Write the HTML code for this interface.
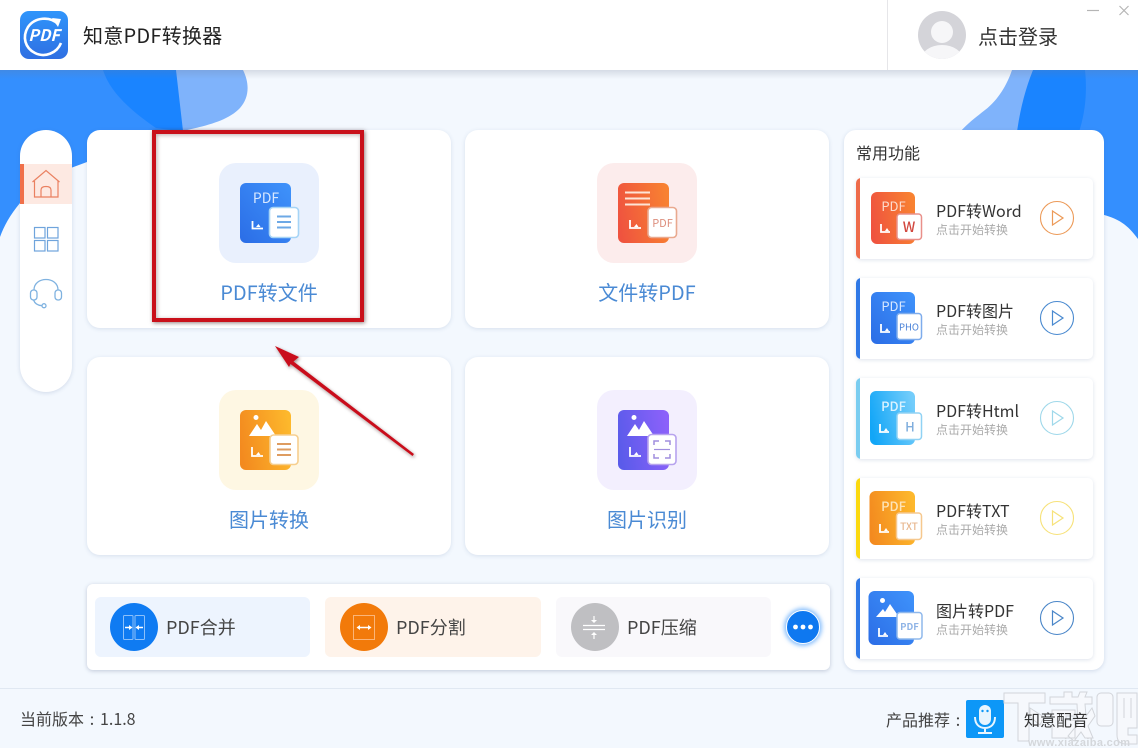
<!DOCTYPE html>
<html lang="zh"><head><meta charset="utf-8"><title>知意PDF转换器</title>
<style>
html,body{margin:0;padding:0}
body{width:1138px;height:748px;position:relative;overflow:hidden;background:#f3f8fe;font-family:"Noto Sans CJK SC","Liberation Sans",sans-serif;color:#333}
div,svg{position:absolute;box-sizing:border-box}
svg text{font-family:"Noto Sans CJK SC","Liberation Sans",sans-serif}
.t{white-space:nowrap}
.c{display:inline-block;width:16px;text-align:center}
.card{background:#fff;border-radius:13px;box-shadow:0 1px 4px rgba(70,100,150,.16);width:364px;height:198px}
.tile{left:132px;top:33px;width:100px;height:100px;border-radius:17px}
.lbl{left:0;width:364px;text-align:center;top:147px;font-size:20px;line-height:30px;color:#4a8ad4}
.row{left:856px;width:237px;height:81px;background:#fff;border-radius:5px;box-shadow:0 1px 4px rgba(70,100,150,.18);overflow:hidden}
.bar{left:0;top:0;width:4px;height:81px}
.rt{left:80px;top:20px;font-size:16px;line-height:24px;color:#333;white-space:nowrap}
.rs{left:80px;top:44px;font-size:12px;line-height:16px;color:#aaa;white-space:nowrap}
.it{top:597px;height:60px;border-radius:6px}
.circ{top:6px;left:15px;width:48px;height:48px;border-radius:50%}
.il{left:71px;top:17px;font-size:18px;line-height:27px;color:#444;white-space:nowrap}
</style></head><body>

<svg style="left:0;top:0" width="1138" height="748" viewBox="0 0 1138 748">
<path d="M0 70H186V140H150L87 162 60 172 20 203C10 215 4 226 0 237Z" fill="#348ffe"/>
<path d="M103 70H176L185 132 156 128C130 110 110 92 103 70Z" fill="#1a84ff"/>
<path d="M176 70H243C250 84 249 98 240 108 228 121 205 126 183 131Z" fill="#7fb3fb"/>
<path d="M1012 70C1007 85 998 100 985 110 975 118 968 123 960 132H1020L1034 70Z" fill="#7fb3fb"/>
<path d="M1060 70H1138V239C1128 225 1118 218 1100 214L1060 132Z" fill="#348ffe"/>
<path d="M1033 70C1025 90 1020 110 1017 132H1079C1086 110 1087 90 1085 70Z" fill="#1a84ff"/>
</svg>
<div style="left:0;top:70px;width:1138px;height:9px;background:linear-gradient(rgba(110,120,145,.22),rgba(110,120,145,0))"></div>

<!-- header -->
<div style="left:0;top:0;width:1138px;height:70px;background:#fff"></div>
<div style="left:887px;top:0;width:1px;height:70px;background:#e6e6e9"></div>
<svg style="left:20px;top:11px" width="48" height="48" viewBox="0 0 48 48">
<defs><linearGradient id="lg" x1="0" y1="0" x2="0" y2="1"><stop offset="0" stop-color="#2f95fb"/><stop offset="1" stop-color="#2f6fe2"/></linearGradient></defs>
<rect width="48" height="48" rx="9" fill="url(#lg)"/>
<path d="M38 13C30 5 15 6 8 16 2 26 5 37 15 42 25 47 37 42 41 32" fill="none" stroke="#fff" stroke-width="2.600"/>
<path d="M32 7l9 1-3 8z" fill="#fff"/>
<text x="24" y="30" text-anchor="middle" font-size="16" font-weight="700" font-style="italic" fill="#fff">PDF</text>
</svg>
<div class="t" style="left:83px;top:20px;font-size:20px;line-height:30px;color:#222;letter-spacing:.25px">知意PDF转换器</div>
<svg style="left:918px;top:11px" width="48" height="48" viewBox="0 0 48 48">
<defs><clipPath id="av"><circle cx="24" cy="24" r="24"/></clipPath></defs>
<circle cx="24" cy="24" r="24" fill="#d4d4d9"/>
<g clip-path="url(#av)"><circle cx="24" cy="21" r="11" fill="#f6f6f8"/><ellipse cx="24" cy="49" rx="21" ry="15" fill="#f6f6f8"/></g>
</svg>
<div class="t" style="left:978px;top:21px;font-size:20px;line-height:30px;color:#333">点击登录</div>
<svg style="left:1080px;top:0" width="58" height="20" viewBox="0 0 58 20">
<path d="M7 10.500H19" stroke="#b5b5b5" stroke-width="1.200"/><path d="M39.500 6l9 9M48.500 6l-9 9" stroke="#b5b5b5" stroke-width="1.200"/>
</svg>

<!-- sidebar -->
<div style="left:20px;top:130px;width:52px;height:262px;border-radius:26px;background:#fff;box-shadow:0 1px 4px rgba(70,100,150,.2)"></div>
<div style="left:20px;top:164px;width:52px;height:40px;background:#fde9e2"></div>
<div style="left:20px;top:164px;width:4px;height:40px;background:#f0704a"></div>
<svg style="left:20px;top:164px" width="52" height="160" viewBox="0 0 52 160">
<g fill="none" stroke="#ea8060" stroke-width="1.200"><path d="M12.500 18L26 6.500 39.500 18M14.500 17V33H38V17M21 33V26Q21 22.500 26 22.500 31 22.500 31 26V33"/></g>
<g fill="none" stroke="#6fa4dc" stroke-width="1.200"><rect x="14.500" y="63.500" width="10.500" height="10.500"/><rect x="27.500" y="63.500" width="10.500" height="10.500"/><rect x="14.500" y="76.500" width="10.500" height="10.500"/><rect x="27.500" y="76.500" width="10.500" height="10.500"/></g>
<g fill="none" stroke="#7fb2e0" stroke-width="1.300"><path d="M14 126C14 112 38 112 38 126"/><rect x="10.500" y="126" width="6.500" height="10" rx="3"/><rect x="35" y="126" width="6.500" height="10" rx="3"/><path d="M13.500 136C15 140 18 141.500 22 141.700"/><circle cx="24" cy="141.700" r="2"/></g>
</svg>

<!-- cards -->
<div class="card" style="left:87px;top:130px">
<div class="tile" style="background:#e9f0fd"></div>
<div class="lbl">PDF转文件</div>
</div>
<div class="card" style="left:465px;top:130px">
<div class="tile" style="background:#fcecec"></div>
<div class="lbl">文件转PDF</div>
</div>
<div class="card" style="left:87px;top:357px">
<div class="tile" style="background:#fef7e3"></div>
<div class="lbl">图片转换</div>
</div>
<div class="card" style="left:465px;top:357px">
<div class="tile" style="background:#f3effe"></div>
<div class="lbl">图片识别</div>
</div>

<!-- big icons -->
<svg style="left:0;top:0" width="1138" height="748" viewBox="0 0 1138 748">
<defs>
<linearGradient id="gb" x1="0" y1="1" x2="1" y2="0"><stop offset="0" stop-color="#2b6de6"/><stop offset="1" stop-color="#3f93fb"/></linearGradient>
<linearGradient id="gr" x1="0" y1=".6" x2="1" y2=".4"><stop offset="0" stop-color="#ef533f"/><stop offset="1" stop-color="#f88231"/></linearGradient>
<linearGradient id="go" x1="0" y1=".6" x2="1" y2=".4"><stop offset="0" stop-color="#f38a1f"/><stop offset="1" stop-color="#fdb82c"/></linearGradient>
<linearGradient id="gp" x1="0" y1=".6" x2="1" y2=".4"><stop offset="0" stop-color="#5a5bea"/><stop offset="1" stop-color="#8c61fa"/></linearGradient>
<linearGradient id="gc" x1="0" y1=".6" x2="1" y2=".3"><stop offset="0" stop-color="#12a6f7"/><stop offset="1" stop-color="#74cdfb"/></linearGradient>
</defs>
<!-- PDF to file -->
<rect x="240" y="183" width="51" height="60" rx="6" fill="url(#gb)"/>
<text x="266" y="203" text-anchor="middle" font-size="14" fill="#d8e8ff">PDF</text>
<path d="M252.500 221v7.500H263" fill="none" stroke="#fff" stroke-width="1.800"/><path d="M256 227l2.500-3 2 3z" fill="#fff"/>
<rect x="269.500" y="207.500" width="29" height="30" rx="3.500" fill="#fff" stroke="#a6d4f6" stroke-width="1.600"/>
<path d="M277 216.500h14M277 222h14M277 227.500h14" stroke="#6da9e6" stroke-width="2"/>
<!-- file to PDF -->
<rect x="618" y="183" width="51" height="60" rx="6" fill="url(#gr)"/>
<path d="M625 192.500h25M625 198.500h25M625 204.500h25" stroke="#fde4d6" stroke-width="2"/>
<path d="M630 220v8H641" fill="none" stroke="#fff" stroke-width="1.800"/><path d="M634 227l2.500-3 2 3z" fill="#fff"/>
<rect x="648" y="207.500" width="28.500" height="30" rx="3.500" fill="#fff" stroke="#e9a98f" stroke-width="1.600"/>
<text x="662.500" y="227" text-anchor="middle" font-size="11" fill="#dd8f7e">PDF</text>
<!-- image convert -->
<rect x="240" y="410" width="51" height="60" rx="6" fill="url(#go)"/>
<circle cx="256" cy="417.500" r="2.500" fill="#fff"/>
<path d="M249 436l8-12 4 6 5-9 10 15z" fill="#fff"/>
<path d="M252 447v9H263" fill="none" stroke="#fff" stroke-width="1.800"/><path d="M256 455l2.500-3 2 3z" fill="#fff"/>
<rect x="270" y="435" width="28" height="29.500" rx="3.500" fill="#fff" stroke="#f6cf90" stroke-width="1.600"/>
<path d="M277 444h14M277 449.500h14M277 455h14" stroke="#de9c60" stroke-width="1.900"/>
<!-- image recog -->
<rect x="618" y="410" width="51" height="60" rx="6" fill="url(#gp)"/>
<circle cx="634" cy="417.500" r="2.500" fill="#fff"/>
<path d="M627 436l8-12 4 6 5-9 10 15z" fill="#fff"/>
<path d="M630 447v9H641" fill="none" stroke="#fff" stroke-width="1.800"/><path d="M634 455l2.500-3 2 3z" fill="#fff"/>
<rect x="648" y="434.500" width="28" height="30" rx="3.500" fill="#fff" stroke="#b7a3ee" stroke-width="1.600"/>
<path d="M654 445v-4h5M670 445v-4h-5M654 454v4h5M670 454v4h-5" fill="none" stroke="#a08ede" stroke-width="1.500"/><path d="M654 449.500h16" stroke="#a08ede" stroke-width="1.200"/>
</svg>

<!-- bottom bar -->
<div style="left:87px;top:584px;width:743px;height:86px;background:#fff;border-radius:6px;box-shadow:0 1px 4px rgba(60,80,120,.28)"></div>
<div class="it" style="left:95px;width:215px;background:#edf4fe">
<div class="circ" style="background:#0f7bf2"></div><div class="il">PDF合并</div>
</div>
<div class="it" style="left:325px;width:216px;background:#fef3ea">
<div class="circ" style="background:#f27a0a"></div><div class="il">PDF分割</div>
</div>
<div class="it" style="left:556px;width:215px;background:#f9f8fb">
<div class="circ" style="background:#bfbfc2"></div><div class="il">PDF压缩</div>
</div>
<svg style="left:0;top:0" width="1138" height="748" viewBox="0 0 1138 748">
<g fill="none" stroke="#8cc0fa" stroke-width="1"><rect x="123.500" y="615.500" width="9.500" height="24" rx="1"/><rect x="135" y="615.500" width="9.500" height="24" rx="1"/></g>
<path d="M125 627.500h5M143 627.500h-5" stroke="#fff" stroke-width="1.500"/><path d="M132.500 627.500l-3.500-2.500v5zM135.500 627.500l3.500-2.500v5z" fill="#fff"/>
<rect x="353.500" y="615.500" width="21" height="24" fill="none" stroke="#fbb578" stroke-width="1"/>
<path d="M359 627.500h10" stroke="#fff" stroke-width="1.500"/><path d="M356.500 627.500l3.500-2.500v5zM371.500 627.500l-3.500-2.500v5z" fill="#fff"/>
<path d="M583 625.500h22M583 629.500h22" stroke="#fff" stroke-width="1.200"/>
<path d="M594 616v5M594 634v5" stroke="#fff" stroke-width="1.200"/><path d="M594 623l-3-3h6zM594 632l-3 3h6z" fill="#fff"/>
</svg>
<div style="left:786px;top:610px;width:34px;height:34px;border-radius:50%;background:#0e78f0;border:1.500px solid #fff;box-shadow:0 0 4px 2px rgba(60,150,250,.6)"></div>
<svg style="left:786px;top:610px" width="34" height="34" viewBox="0 0 34 34"><circle cx="9.500" cy="17" r="2.400" fill="#fff"/><circle cx="17" cy="17" r="2.400" fill="#fff"/><circle cx="24.500" cy="17" r="2.400" fill="#fff"/></svg>

<!-- right panel -->
<div style="left:844px;top:130px;width:260px;height:540px;background:#fff;border-radius:12px;box-shadow:0 1px 4px rgba(70,100,150,.2)"></div>
<div class="t" style="left:856px;top:140px;font-size:16px;line-height:24px;color:#333">常用功能</div>

<div class="row" style="top:178px"><div class="bar" style="background:#ee6b4a"></div><div class="rt">PDF转Word</div><div class="rs">点击开始转换</div></div>
<div class="row" style="top:278px"><div class="bar" style="background:#2f78e6"></div><div class="rt">PDF转图片</div><div class="rs">点击开始转换</div></div>
<div class="row" style="top:378px"><div class="bar" style="background:#7acdf0"></div><div class="rt">PDF转Html</div><div class="rs">点击开始转换</div></div>
<div class="row" style="top:478px"><div class="bar" style="background:#fbd90f"></div><div class="rt">PDF转TXT</div><div class="rs">点击开始转换</div></div>
<div class="row" style="top:578px"><div class="bar" style="background:#2f78e6"></div><div class="rt">图片转PDF</div><div class="rs">点击开始转换</div></div>

<svg style="left:0;top:0" width="1138" height="748" viewBox="0 0 1138 748">
<!-- word -->
<rect x="871" y="192" width="44" height="52" rx="6" fill="url(#gr)"/>
<text x="893.500" y="211" text-anchor="middle" font-size="13" fill="#fcdccd">PDF</text>
<path d="M881 224v8H890" fill="none" stroke="#fff" stroke-width="1.800"/><path d="M885 231l2-3 2 3z" fill="#fff"/>
<rect x="897" y="214" width="24.500" height="25.500" rx="3" fill="#fff" stroke="#e9908a" stroke-width="1.500"/>
<text x="909" y="232" text-anchor="middle" font-size="14" font-weight="500" fill="#d2483f">W</text>
<circle cx="1057" cy="218" r="16.500" fill="none" stroke="#ec9a58" stroke-width="1.100"/>
<path d="M1052.500 211v14l10.500-7z" fill="none" stroke="#ec9a58" stroke-width="1.200"/>
<!-- pic -->
<rect x="871" y="292" width="44" height="52" rx="6" fill="url(#gb)"/>
<text x="893.500" y="311" text-anchor="middle" font-size="13" fill="#d8e8ff">PDF</text>
<path d="M881 324v8H890" fill="none" stroke="#fff" stroke-width="1.800"/><path d="M885 331l2-3 2 3z" fill="#fff"/>
<rect x="897" y="313.500" width="24.500" height="26" rx="3" fill="#fff" stroke="#7eacec" stroke-width="1.500"/>
<text x="909" y="330.500" text-anchor="middle" font-size="9.500" fill="#4a82d8">PHO</text>
<circle cx="1057" cy="318" r="16.500" fill="none" stroke="#4a8ad0" stroke-width="1.100"/>
<path d="M1052.500 311v14l10.500-7z" fill="none" stroke="#4a8ad0" stroke-width="1.200"/>
<!-- html -->
<rect x="870" y="391" width="45" height="54" rx="6" fill="url(#gc)"/>
<text x="893.500" y="411" text-anchor="middle" font-size="13" font-weight="500" fill="#dcf3ff">PDF</text>
<path d="M880 424v8H889" fill="none" stroke="#fff" stroke-width="1.800"/><path d="M884 431l2-3 2 3z" fill="#fff"/>
<rect x="897" y="413" width="24.500" height="26.500" rx="3" fill="#fff" stroke="#90d2f4" stroke-width="1.500"/>
<text x="910" y="431.500" text-anchor="middle" font-size="13" font-weight="500" fill="#80aedd">H</text>
<circle cx="1057" cy="418" r="16.500" fill="none" stroke="#9fd8ea" stroke-width="1.100"/>
<path d="M1052.500 411v14l10.500-7z" fill="none" stroke="#9fd8ea" stroke-width="1.200"/>
<!-- txt -->
<rect x="869.500" y="491" width="45.500" height="54" rx="6" fill="url(#go)"/>
<text x="893.500" y="511" text-anchor="middle" font-size="13" font-weight="500" fill="#fde4b8">PDF</text>
<path d="M880 524v8H889" fill="none" stroke="#fff" stroke-width="1.800"/><path d="M884 531l2-3 2 3z" fill="#fff"/>
<rect x="896.500" y="513" width="25" height="26.500" rx="3" fill="#fff" stroke="#f6c88e" stroke-width="1.500"/>
<text x="909" y="530" text-anchor="middle" font-size="10" font-weight="500" fill="#e8b890">TXT</text>
<circle cx="1057" cy="518" r="16.500" fill="none" stroke="#f7e27a" stroke-width="1.100"/>
<path d="M1052.500 511v14l10.500-7z" fill="none" stroke="#f7e27a" stroke-width="1.200"/>
<!-- img to pdf -->
<rect x="868.500" y="591" width="45.500" height="54" rx="6" fill="url(#gb)"/>
<circle cx="882.500" cy="600.500" r="2.500" fill="#fff"/>
<path d="M876 617l7-8 2 3 5-8 9 13z" fill="#fff"/>
<path d="M879 628v8H888" fill="none" stroke="#fff" stroke-width="1.800"/><path d="M883 635l2-3 2 3z" fill="#fff"/>
<rect x="897" y="612.500" width="25" height="26.500" rx="3" fill="#fff" stroke="#8fb8ec" stroke-width="1.500"/>
<text x="909.500" y="630" text-anchor="middle" font-size="9.500" font-weight="700" fill="#8fb4e6">PDF</text>
<circle cx="1057" cy="618" r="16.500" fill="none" stroke="#4a86c8" stroke-width="1.100"/>
<path d="M1052.500 611v14l10.500-7z" fill="none" stroke="#4a86c8" stroke-width="1.200"/>
</svg>

<!-- footer -->
<div style="left:0;top:688px;width:1138px;height:1px;background:#e0e8f2"></div>
<div class="t" style="left:20px;top:706px;font-size:16px;line-height:24px;color:#444">当前版本<span class="c">:</span>1.1.8</div>
<div class="t" style="left:886px;top:707px;font-size:16px;line-height:24px;color:#444">产品推荐<span class="c">:</span></div>
<svg style="left:966px;top:700px" width="38" height="38" viewBox="0 0 38 38">
<rect width="38" height="38" rx="2" fill="#0d97f7"/>
<rect x="13" y="5" width="12" height="20" rx="6" fill="#e8f5fe"/>
<circle cx="16.500" cy="11" r="1.200" fill="#0d97f7"/><circle cx="21.500" cy="11" r="1.200" fill="#0d97f7"/>
<path d="M9 17c0 7 4 11 10 11s10-4 10-11M19 28v6M12 33h14" fill="none" stroke="#e8f5fe" stroke-width="2"/>
</svg>

<!-- watermark -->
<svg style="left:0;top:0" width="1138" height="748" viewBox="0 0 1138 748">
<g fill="#f6f8fc" stroke="#d2d5da" stroke-width="1">
<path d="M1004 693H1045V703H1029V741H1018V703H1004ZM1030 708L1044 717 1040 725 1030 717Z"/>
<path d="M1050 697H1064V692H1072V697H1078L1080 692H1087L1085 697H1092V704H1085L1086 716 1092 708 1095 716 1088 726 1093 738H1085L1081 732 1074 741 1068 736 1078 724 1077 704H1050ZM1052 710H1075V716H1066V720H1075V738H1052Z"/>
<rect x="1097" y="693" width="16" height="33" rx="4"/>
<path d="M1117 693H1137V728H1128V735H1137V744H1126C1120 744 1117 741 1117 735Z"/>
<path d="M1124 698V718M1131 698V718"/>
</g>
<text x="1028" y="746" font-size="11" font-weight="700" fill="#d4d7db" textLength="102" style="font-family:'Liberation Sans',sans-serif">www.xiazaiba.com</text>
</svg>
<div class="t" style="left:1024px;top:707px;font-size:16px;line-height:24px;color:#333">知意配音</div>

<!-- annotation -->
<div style="left:152px;top:130px;width:212px;height:192px;border:4px solid #c9101a;box-shadow:1px 1px 4px rgba(60,20,20,.55),inset 1px 1px 4px rgba(60,20,20,.35)"></div>
<svg style="left:0;top:0" width="1138" height="748" viewBox="0 0 1138 748">
<defs><filter id="sh" x="-20%" y="-20%" width="140%" height="140%"><feDropShadow dx="1" dy="1.500" stdDeviation="1.500" flood-color="#402020" flood-opacity=".5"/></filter></defs>
<path d="M275 346L299 357 293.500 361.500 414 454 412.500 456 290.500 364 289 367Z" fill="#c9101a" filter="url(#sh)"/>
</svg>

</body></html>
